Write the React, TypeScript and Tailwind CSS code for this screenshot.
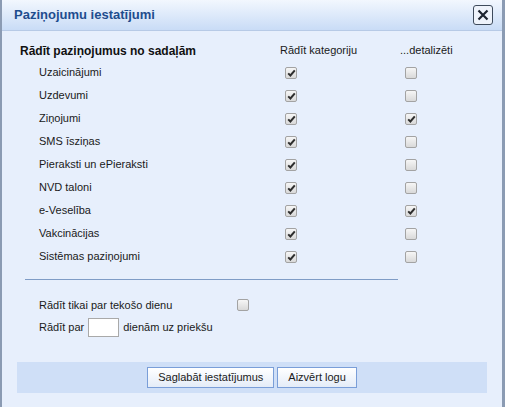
import React from 'react'

const rows = [
  { label: 'Uzaicinājumi', show: true, detail: false },
  { label: 'Uzdevumi', show: true, detail: false },
  { label: 'Ziņojumi', show: true, detail: true },
  { label: 'SMS īsziņas', show: true, detail: false },
  { label: 'Pieraksti un ePieraksti', show: true, detail: false },
  { label: 'NVD taloni', show: true, detail: false },
  { label: 'e-Veselība', show: true, detail: true },
  { label: 'Vakcinācijas', show: true, detail: false },
  { label: 'Sistēmas paziņojumi', show: true, detail: false },
]

function Check({ on }: { on: boolean }) {
  return (
    <span className="w-[12px] h-[12px] rounded-[2px] border border-[#a3a3a3] bg-gradient-to-b from-[#f6f6f6] to-[#d9d9d9] flex items-center justify-center">
      {on && (
        <svg width="9" height="8" viewBox="0 0 9 8">
          <path d="M1.2 4.4 L3.4 6.5 L7.8 1.4" fill="none" stroke="#2e2e2e" strokeWidth="2" />
        </svg>
      )}
    </span>
  )
}

export default function App() {
  return (
    <div className="w-[505px] h-[407px] flex flex-col bg-[#e7effc] border-l-2 border-r-[3px] border-[#8b9bb3] text-[11px] text-[#1a1a1a] overflow-hidden"
      style={{ fontFamily: '"Liberation Sans", Arial, sans-serif' }}>
      <div className="h-[31px] flex items-center justify-between pl-[12px] pr-[9px] bg-gradient-to-b from-[#f2f7fe] to-[#c9dcf6] border-b border-[#b7cae6]">
        <span className="text-[13px] font-bold text-[#1e4d8e]">Paziņojumu iestatījumi</span>
        <span className="w-[20px] h-[20px] rounded-[3px] border border-[#3e4b5c] bg-[#eef3fb] flex items-center justify-center">
          <svg width="12" height="12" viewBox="0 0 12 12">
            <path d="M1.5 1.5 L10.5 10.5 M10.5 1.5 L1.5 10.5" stroke="#1c2430" strokeWidth="2.2" />
          </svg>
        </span>
      </div>

      <div className="pt-[9px] pl-[18px]">
        <div className="grid grid-cols-[260px_120px_1fr] h-[21px] items-center">
          <span className="font-bold text-[12px] text-[#111]">Rādīt paziņojumus no sadaļām</span>
          <span>Rādīt kategoriju</span>
          <span>...detalizēti</span>
        </div>
        {rows.map((r) => (
          <div key={r.label} className="grid grid-cols-[260px_120px_1fr] h-[23px] items-center">
            <span className="pl-[19px]">{r.label}</span>
            <span className="pl-[5px]"><Check on={r.show} /></span>
            <span className="pl-[5px]"><Check on={r.detail} /></span>
          </div>
        ))}
        <div className="mt-[11px] ml-[5px] w-[373px] h-px bg-[#7f9cc6]" />
        <div className="mt-[14px] h-[22px] flex items-center pl-[19px]">
          <span className="w-[198px]">Rādīt tikai par tekošo dienu</span>
          <Check on={false} />
        </div>
        <div className="h-[22px] flex items-center pl-[19px] gap-[4px]">
          <span>Rādīt par</span>
          <span className="w-[31px] h-[19px] bg-white border border-[#a9a9a9]" />
          <span>dienām uz priekšu</span>
        </div>
      </div>

      <div className="mt-[24px] mx-[15px] h-[31px] bg-[#cfdff7] flex items-center justify-center gap-[3px]">
        <button className="h-[21px] px-[10px] border border-[#7a9ed8] bg-gradient-to-b from-[#ffffff] to-[#e4ecf8] text-[11px] text-[#1a1a1a]">Saglabāt iestatījumus</button>
        <button className="h-[21px] px-[10px] border border-[#7a9ed8] bg-gradient-to-b from-[#ffffff] to-[#e4ecf8] text-[11px] text-[#1a1a1a]">Aizvērt logu</button>
      </div>
    </div>
  )
}
